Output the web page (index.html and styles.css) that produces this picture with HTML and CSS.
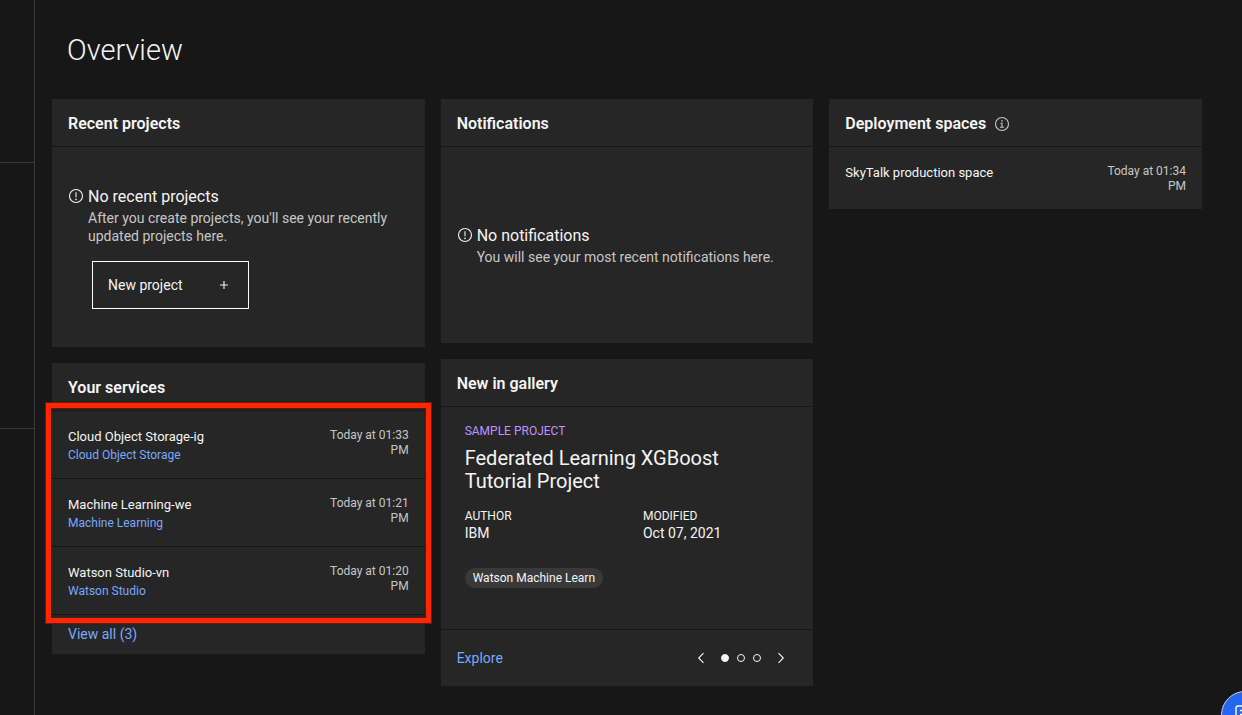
FILE: index.html
```html
<!DOCTYPE html>
<html lang="en">
<head>
<meta charset="utf-8">
<meta name="viewport" content="width=device-width, initial-scale=1">
<title>Overview</title>
<link rel="stylesheet" href="styles.css">
</head>
<body>
<div class="page">
  <aside class="rail" aria-hidden="true">
    <div class="rail-top"></div>
    <div class="rail-middle"></div>
  </aside>
  <main class="main">
    <h1 class="page-title">Overview</h1>
    <div class="columns">
      <div class="column">
        <section class="card">
          <h2 class="card-header">Recent projects</h2>
          <div class="empty empty-projects">
            <svg class="icon" viewBox="0 0 16 16" aria-hidden="true"><circle cx="8" cy="8" r="6.5"/><path d="M8 4.2v5"/><circle class="solid" cx="8" cy="11.4" r=".8"/></svg>
            <div class="empty-content">
              <h3 class="empty-title">No recent projects</h3>
              <p class="empty-text">After you create projects, you'll see your recently updated projects here.</p>
              <button class="new-project" type="button">New project
                <svg class="icon" viewBox="0 0 16 16" aria-hidden="true"><path d="M8 4v8M4 8h8"/></svg>
              </button>
            </div>
          </div>
        </section>
        <section class="card">
          <h2 class="card-header">Your services</h2>
          <div class="services">
            <ul class="list">
              <li class="row">
                <div class="row-main"><span class="row-name">Cloud Object Storage-ig</span><a class="row-link" href="#">Cloud Object Storage</a></div>
                <time class="row-time">Today at 01:33 PM</time>
              </li>
              <li class="row">
                <div class="row-main"><span class="row-name">Machine Learning-we</span><a class="row-link" href="#">Machine Learning</a></div>
                <time class="row-time">Today at 01:21 PM</time>
              </li>
              <li class="row">
                <div class="row-main"><span class="row-name">Watson Studio-vn</span><a class="row-link" href="#">Watson Studio</a></div>
                <time class="row-time">Today at 01:20 PM</time>
              </li>
            </ul>
            <div class="highlight"></div>
          </div>
          <div class="view-all"><a class="link" href="#">View all (3)</a></div>
        </section>
      </div>
      <div class="column">
        <section class="card">
          <h2 class="card-header">Notifications</h2>
          <div class="empty empty-notifications">
            <svg class="icon" viewBox="0 0 16 16" aria-hidden="true"><circle cx="8" cy="8" r="6.5"/><path d="M8 4.2v5"/><circle class="solid" cx="8" cy="11.4" r=".8"/></svg>
            <div class="empty-content">
              <h3 class="empty-title">No notifications</h3>
              <p class="empty-text">You will see your most recent notifications here.</p>
            </div>
          </div>
        </section>
        <section class="card">
          <h2 class="card-header">New in gallery</h2>
          <div class="gallery">
            <p class="gallery-type">SAMPLE PROJECT</p>
            <h3 class="gallery-title">Federated Learning XGBoost Tutorial Project</h3>
            <dl class="meta">
              <div><dt>AUTHOR</dt><dd>IBM</dd></div>
              <div><dt>MODIFIED</dt><dd>Oct 07, 2021</dd></div>
            </dl>
            <span class="tag">Watson Machine Learn</span>
          </div>
          <div class="gallery-footer">
            <a class="link" href="#">Explore</a>
            <div class="pager">
              <button class="arrow" type="button" aria-label="Previous"><svg class="icon" viewBox="0 0 16 16"><path d="M10.5 3.2L5.7 8l4.8 4.8"/></svg></button>
              <div class="dots">
                <button class="dot dot-active" type="button" aria-label="Item 1"></button>
                <button class="dot" type="button" aria-label="Item 2"></button>
                <button class="dot" type="button" aria-label="Item 3"></button>
              </div>
              <button class="arrow" type="button" aria-label="Next"><svg class="icon" viewBox="0 0 16 16"><path d="M5.5 3.2L10.3 8l-4.8 4.8"/></svg></button>
            </div>
          </div>
        </section>
      </div>
      <div class="column">
        <section class="card">
          <h2 class="card-header">Deployment spaces
            <svg class="icon icon-info" viewBox="0 0 16 16" aria-hidden="true"><circle cx="8" cy="8" r="6.5"/><path d="M6.5 7.2H8v4M6 11.3h4"/><circle class="solid" cx="8" cy="4.9" r=".8"/></svg>
          </h2>
          <ul class="list">
            <li class="row">
              <div class="row-main"><span class="row-name">SkyTalk production space</span></div>
              <time class="row-time">Today at 01:34 PM</time>
            </li>
          </ul>
        </section>
      </div>
    </div>
  </main>
</div>
<button class="chat" type="button" aria-label="Chat">
  <svg class="chat-icon" viewBox="0 0 20 20" aria-hidden="true"><path d="M11 19l3-4h3a2 2 0 0 0 2-2V3a2 2 0 0 0-2-2H3a2 2 0 0 0-2 2v10a2 2 0 0 0 2 2h6M5 5.5h10M5 9.5h7"/></svg>
</button>
</body>
</html>
```
FILE: styles.css
```css
* {
  box-sizing: border-box;
}

body {
  margin: 0;
  background: #171717;
  color: #f4f4f4;
  font-family: Roboto, "Liberation Sans", sans-serif;
  font-size: 14px;
  line-height: 18px;
}

h1, h2, h3, p, ul, dl, dd {
  margin: 0;
  padding: 0;
  font-weight: 400;
}

button {
  margin: 0;
  padding: 0;
  border: 0;
  background: none;
  color: inherit;
  font: inherit;
  cursor: pointer;
}

a {
  color: #78a9ff;
  text-decoration: none;
}

.page {
  display: flex;
  min-height: 100vh;
}

.rail {
  flex: 0 0 35px;
  border-right: 1px solid #393939;
}

.rail-top,
.rail-middle {
  border-bottom: 1px solid #393939;
}

.rail-top {
  height: 163px;
}

.rail-middle {
  height: 266px;
}

.main {
  flex: 1;
  min-width: 0;
  padding: 32px 40px 29px 17px;
}

.page-title {
  padding: 0 15px;
  margin-bottom: 31px;
  font-size: 29px;
  line-height: 36px;
  font-weight: 300;
}

.columns {
  display: grid;
  grid-template-columns: repeat(3, minmax(0, 1fr));
  gap: 16px;
  align-items: start;
}

.column {
  display: flex;
  flex-direction: column;
  gap: 16px;
}

.card {
  background: #262626;
}

.card-header {
  display: flex;
  align-items: center;
  gap: 8px;
  height: 48px;
  padding: 2px 16px 0;
  border-bottom: 1px solid #171717;
  font-size: 16px;
  line-height: 24px;
  font-weight: 600;
}

.icon {
  flex: none;
  display: block;
  width: 16px;
  height: 16px;
  fill: none;
  stroke: currentColor;
  stroke-width: 1.1;
}

.icon .solid {
  fill: currentColor;
  stroke: none;
}

.icon-info {
  color: #c6c6c6;
}

.empty {
  display: grid;
  grid-template-columns: 16px 1fr;
  column-gap: 4px;
  align-content: center;
  padding: 0 16px;
}

.empty > .icon {
  margin-top: 3px;
}

.empty-projects {
  min-height: 200px;
}

.empty-notifications {
  min-height: 196px;
}

.empty-title {
  font-size: 16px;
  line-height: 24px;
}

.empty-text {
  color: #c6c6c6;
}

.new-project {
  display: flex;
  align-items: center;
  justify-content: space-between;
  width: 157px;
  height: 48px;
  margin: 16px 0 0 4px;
  padding: 0 16px 0 15px;
  border: 1px solid #fff;
}

.services {
  position: relative;
}

.list {
  list-style: none;
}

.row {
  display: flex;
  justify-content: space-between;
  gap: 16px;
  padding: 17px 16px 15px;
}

.services .row {
  padding-bottom: 14px;
  border-bottom: 1px solid #171717;
}

.row-main {
  display: flex;
  flex-direction: column;
  font-size: 13px;
}

.row-link {
  font-size: 12px;
}

.row-time {
  width: 88px;
  color: #c6c6c6;
  font-size: 12px;
  line-height: 15px;
  text-align: right;
}

.highlight {
  position: absolute;
  inset: -8px -6px -8px -6px;
  border: 5px solid #ff2600;
  box-shadow: 0 0 0 1px #6b1a0e, inset 0 0 0 1px #4d1a14;
  pointer-events: none;
}

.view-all {
  display: flex;
  padding: 10px 16px 11px;
}

.gallery {
  padding: 16px 24px 41px;
}

.gallery-type {
  color: #be95ff;
  font-size: 12px;
  line-height: 16px;
}

.gallery-title {
  margin: 8px 0 15px;
  font-size: 20px;
  line-height: 23px;
}

.meta {
  display: grid;
  grid-template-columns: 1fr 1fr;
  column-gap: 32px;
  margin-bottom: 26px;
}

.meta dt {
  font-size: 12px;
  line-height: 16px;
}

.tag {
  display: block;
  width: fit-content;
  padding: 0 8px;
  border-radius: 10px;
  background: #393939;
  font-size: 12px;
  line-height: 20px;
}

.gallery-footer {
  display: flex;
  align-items: center;
  justify-content: space-between;
  height: 57px;
  padding: 0 24px 0 16px;
  border-top: 1px solid #171717;
}

.pager {
  display: flex;
  align-items: center;
  gap: 12px;
}

.dots {
  display: flex;
  gap: 8px;
}

.dot {
  width: 8px;
  height: 8px;
  border: 1px solid #f4f4f4;
  border-radius: 50%;
}

.dot-active {
  background: #f4f4f4;
}

.chat {
  position: fixed;
  right: -27px;
  bottom: -24px;
  display: grid;
  place-items: center;
  width: 48px;
  height: 48px;
  border: 1px solid #d0d0d0;
  border-radius: 50%;
  background: #2466f2;
}

.chat-icon {
  width: 20px;
  height: 20px;
  fill: none;
  stroke: #fff;
  stroke-width: 1.4;
}
```
